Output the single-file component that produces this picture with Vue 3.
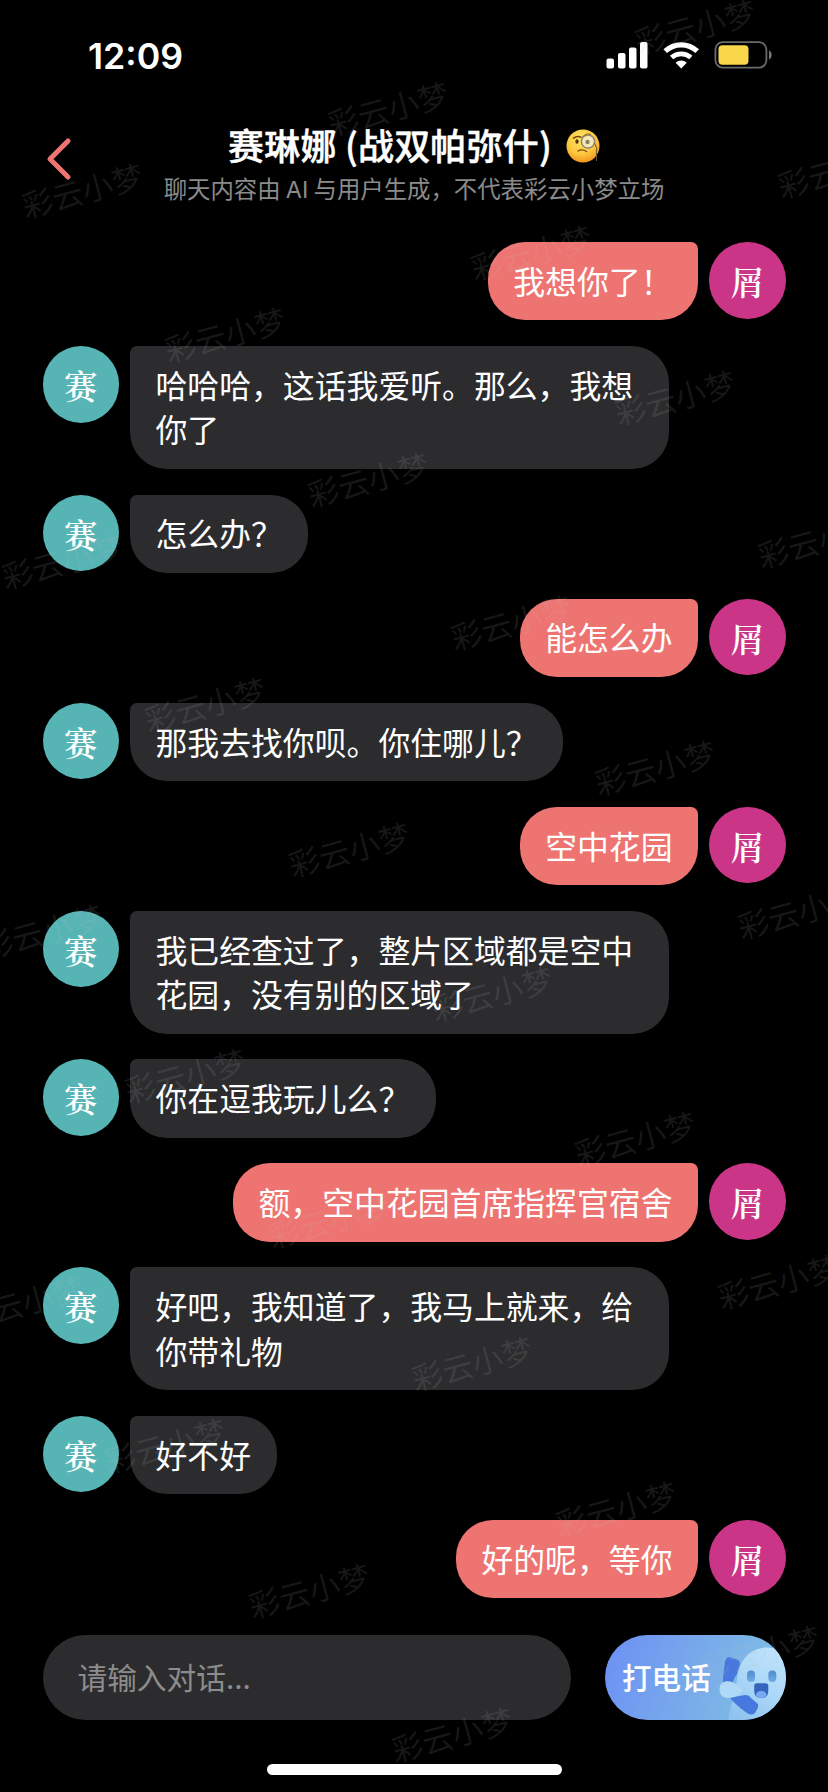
<script setup>
const messages = [
  { me: true, text: '我想你了！' },
  { me: false, text: '哈哈哈，这话我爱听。那么，我想你了' },
  { me: false, text: '怎么办？' },
  { me: true, text: '能怎么办' },
  { me: false, text: '那我去找你呗。你住哪儿？' },
  { me: true, text: '空中花园' },
  { me: false, text: '我已经查过了，整片区域都是空中花园，没有别的区域了' },
  { me: false, text: '你在逗我玩儿么？' },
  { me: true, text: '额，空中花园首席指挥官宿舍' },
  { me: false, text: '好吧，我知道了，我马上就来，给你带礼物' },
  { me: false, text: '好不好' },
  { me: true, text: '好的呢，等你' }
]

// Watermark lattice: two interleaved rows, repeated down the screen
const marks = []
for (let pair = 0; pair < 5; pair++) {
  for (const [bx, by] of [[694.5, 26], [837.5, 169.5]]) {
    for (let k = 0; k < 4; k++) {
      const x = bx - 19.7 * pair - 306.500 * k
      const y = by + 370.5 * pair + 82.2 * k
      if (x > -60 && x < 890 && y < 1790 && !(x < 10 && y > 1600)) marks.push({ x, y })
    }
  }
}
</script>

<template>
  <div class="screen">
    <div class="status">
      <span class="clock">12:09</span>
      <svg class="status-icons" width="170" height="32" viewBox="0 0 170 32">
        <g fill="#fff">
          <rect x="0.5" y="18.5" width="7.5" height="10" rx="2" />
          <rect x="12" y="13" width="7.5" height="15.5" rx="2" />
          <rect x="23" y="7.5" width="7.5" height="21" rx="2" />
          <rect x="34" y="2" width="7.5" height="26.5" rx="2" />
        </g>
        <g transform="translate(75.2 28.4)">
          <path d="M0 0L-5.6 -5.7A8.2 8.2 0 0 1 5.6 -5.7Z" fill="#fff" />
          <path d="M-9.6 -10.8A14.2 14.2 0 0 1 9.6 -10.8" fill="none" stroke="#fff" stroke-width="4.8" />
          <path d="M-16 -17.2A23.2 23.2 0 0 1 16 -17.2" fill="none" stroke="#fff" stroke-width="5.2" />
        </g>
        <rect x="109.400" y="2.1" width="51" height="25.6" rx="7.5" fill="none" stroke="#6b6b6b" stroke-width="1.8" />
        <rect x="112.500" y="5.2" width="30" height="19.6" rx="4" fill="#f8d74b" />
        <path d="M163 10.5c3.6 1.6 3.6 7.400 0 9z" fill="#777" />
      </svg>
    </div>

    <header class="header">
      <svg class="back" width="30" height="46" viewBox="0 0 30 46">
        <path d="M24 5L6 23L24 41" fill="none" stroke="#ee7471" stroke-width="5" stroke-linecap="round" stroke-linejoin="round" />
      </svg>
      <div class="heading">
        <div class="title">
          <span class="name">赛琳娜 (战双帕弥什)</span>
          <svg class="emoji" width="34" height="34" viewBox="0 0 34 34">
            <defs>
              <radialGradient id="face" cx="0.45" cy="0.3" r="0.75">
                <stop offset="0" stop-color="#ffe767" />
                <stop offset="0.6" stop-color="#fcc63b" />
                <stop offset="1" stop-color="#ee8d1c" />
              </radialGradient>
            </defs>
            <circle cx="17" cy="17" r="16.500" fill="url(#face)" />
            <path d="M7.500 9.200Q11 6.300 15 8.200" fill="none" stroke="#7a4313" stroke-width="1.500" stroke-linecap="round" />
            <ellipse cx="11" cy="12.500" rx="1.700" ry="2.300" fill="#5d3310" />
            <circle cx="22" cy="12.500" r="6.600" fill="#f6e9b7" stroke="#8d8674" stroke-width="1.500" />
            <circle cx="21.500" cy="13" r="2.200" fill="#8b8369" />
            <path d="M16.500 8Q20 3.500 25 5.500" fill="none" stroke="#a9670f" stroke-width="1" />
            <path d="M12 22Q16.500 19.500 20.500 22.500" fill="none" stroke="#7a4313" stroke-width="1.400" stroke-linecap="round" />
            <path d="M28.500 14Q32 19 30.500 25V32" fill="none" stroke="#6a5530" stroke-width="1" />
          </svg>
        </div>
        <div class="notice">聊天内容由 <span class="latin">AI</span> 与用户生成，不代表彩云小梦立场</div>
      </div>
    </header>

    <main class="chat">
      <div v-for="(m, i) in messages" :key="i" class="row" :class="{ me: m.me }">
        <div class="avatar">{{ m.me ? '屑' : '赛' }}</div>
        <div class="bubble">{{ m.text }}</div>
      </div>
    </main>

    <footer class="composer">
      <div class="field">请输入对话...</div>
      <div class="call">
        <span class="call-label">打电话</span>
        <svg class="ghost" width="70" height="85" viewBox="0 0 70 85">
          <defs>
            <linearGradient id="body" x1="0.8" y1="0" x2="0.2" y2="1">
              <stop offset="0" stop-color="#c0e4fb" />
              <stop offset="0.55" stop-color="#abd7f8" />
              <stop offset="1" stop-color="#8fc3ee" />
            </linearGradient>
            <linearGradient id="eye" x1="0" y1="0" x2="0" y2="1">
              <stop offset="0" stop-color="#4e8bd0" />
              <stop offset="1" stop-color="#71ade3" />
            </linearGradient>
          </defs>
          <path d="M12.500 85C14 72 19 60 21 44C23 25 34 12.500 51 12.500C66 12.500 76 24 78 40V85Z" fill="url(#body)" />
          <path d="M9 27Q10 21 15 22.500L22 25Q25 27 23.500 31L21 39Q17 44 16 51L18 62L29 60Q33 60 35 63L42 69Q43 72 39 78Q36 81 31 78Q6 61 7 43Z" fill="#4678dd" />
          <path d="M3.500 55C3 47 10 45 16 47C21 49 24 52 27 55C23 61 18 63 12 63C7 63 4 60 3.500 55Z" fill="#b0d8f7" />
          <rect x="31" y="35.500" width="8" height="11.500" rx="4" fill="url(#eye)" />
          <rect x="52.300" y="35.500" width="8" height="11.500" rx="4" fill="url(#eye)" />
          <path d="M38.200 51Q38.200 48.300 41 48.300H49.500Q52.300 48.300 52.300 51V56Q52.300 63 45.300 63Q38.200 63 38.200 56Z" fill="#3566bd" />
          <ellipse cx="45.300" cy="59.500" rx="5.200" ry="3.500" fill="#79a9f5" />
        </svg>
      </div>
    </footer>

    <div class="home-bar"></div>

    <div class="watermarks">
      <span v-for="(w, i) in marks" :key="i" class="mark" :style="{ left: w.x + 'px', top: w.y + 'px' }">彩云小梦</span>
    </div>
  </div>
</template>

<style>
body {
  background: #000;
}
</style>

<style scoped>
.screen {
  position: relative;
  box-sizing: border-box;
  width: 828px;
  height: 1792px;
  overflow: hidden;
  background: #000;
  color: #fff;
  font-family: "Noto Sans CJK SC", sans-serif;
  display: flex;
  flex-direction: column;
}
.status {
  box-sizing: border-box;
  height: 110px;
  flex: none;
  display: flex;
  justify-content: space-between;
  align-items: center;
  padding: 2px 52.5px 0 88px;
}
.clock {
  font: 600 35.7px/40px Inter, sans-serif;
}
.status-icons {
  display: block;
}
.header {
  height: 132px;
  flex: none;
  display: flex;
  padding: 0 44px;
}
.back {
  margin-top: 26px;
}
.heading {
  flex: 1;
  margin-right: 30px;
  display: flex;
  flex-direction: column;
  align-items: center;
  white-space: nowrap;
}
.title {
  display: flex;
  align-items: center;
  gap: 14px;
  margin-top: 14px;
  font-size: 36px;
  line-height: 44px;
  font-weight: 500;
}
.name {
  position: relative;
  top: -2px;
  letter-spacing: 0.2px;
  -webkit-text-stroke: 0.5px #fff;
}
.notice {
  margin-top: 4px;
  font-size: 23.4px;
  line-height: 32px;
  color: #8b8b8b;
}
.latin {
  font-family: Inter, sans-serif;
}
.chat {
  flex: none;
  height: 1392.5px;
  padding: 0 42.5px;
  display: flex;
  flex-direction: column;
  gap: 25.65px;
}
.row {
  display: flex;
  gap: 11px;
}
.row.me {
  flex-direction: row-reverse;
}
.avatar {
  flex: none;
  width: 76.5px;
  height: 76.5px;
  border-radius: 50%;
  background: #57b4b5;
  font: 600 33px/78px "Noto Serif CJK SC", "Songti SC", "Noto Sans CJK SC", serif;
  text-align: center;
}
.me .avatar {
  background: #cb3587;
}
.bubble {
  box-sizing: border-box;
  max-width: 538.5px;
  padding: 15.9px 25.5px 17.95px;
  border-radius: 7px 37px 37px 37px;
  background: #2c2c2e;
  font-size: 31.85px;
  line-height: 44.55px;
  word-break: break-all;
}
.me .bubble {
  border-radius: 37px 7px 37px 37px;
  background: #ee7471;
}
.composer {
  flex: none;
  height: 85px;
  padding: 0 42.5px;
  display: flex;
  justify-content: space-between;
}
.field {
  box-sizing: border-box;
  width: 528.5px;
  padding-left: 35px;
  border-radius: 43px;
  background: #2c2c2e;
  color: #8c8c8c;
  font-size: 29.7px;
  line-height: 83px;
}
.call {
  box-sizing: border-box;
  width: 180.5px;
  padding-left: 17px;
  border-radius: 43px;
  overflow: hidden;
  display: flex;
  background: linear-gradient(110deg, #6c90f5 0%, #76a5ec 40%, #7db8e6 75%, #7fb9ea 100%);
}
.call-label {
  flex: none;
  width: 94px;
  font-size: 29.6px;
  line-height: 83px;
  font-weight: 500;
}
.ghost {
  flex: none;
}
.home-bar {
  width: 295px;
  height: 11px;
  margin: 44.5px auto 0;
  border-radius: 6px;
  background: #fff;
}
.watermarks {
  position: absolute;
  inset: 0;
  pointer-events: none;
}
.mark {
  position: absolute;
  font-size: 31px;
  line-height: 36px;
  white-space: nowrap;
  color: rgba(190, 190, 190, 0.12);
  transform: translate(-50%, -50%) rotate(-15deg);
}
</style>
